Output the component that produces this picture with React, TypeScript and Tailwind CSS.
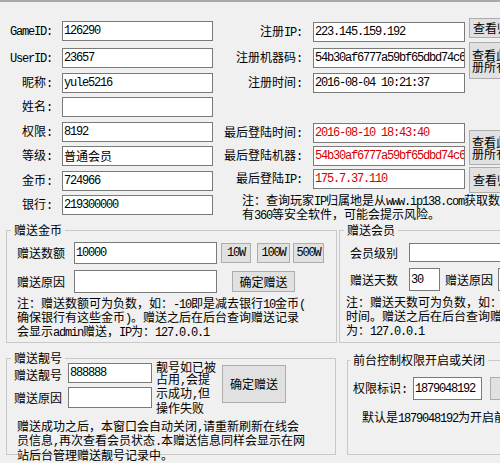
import React from "react";

const MONO = "font-['Liberation_Mono',monospace] tracking-[-1.2px]";

// split a string so latin runs get the narrow mono face and CJK keeps Noto
function Mx({ s }: { s: string }) {
  const parts = s.split(/([\x20-\x7e]+)/).filter(Boolean);
  return (
    <>
      {parts.map((p, i) =>
        /^[\x20-\x7e]+$/.test(p) ? (
          <span key={i} className={MONO}>
            {p}
          </span>
        ) : (
          <span key={i}>{p}</span>
        )
      )}
    </>
  );
}

function Field({ v = "", red, className = "" }: { v?: string; red?: boolean; className?: string }) {
  return (
    <div
      className={`flex items-center bg-white border border-[#7a7a7a] overflow-hidden whitespace-nowrap pl-[1px] shrink-0 ${
        red ? "text-[#d40000]" : ""
      } ${className}`}
    >
      <Mx s={v} />
    </div>
  );
}

function Btn({ children, className = "" }: { children?: React.ReactNode; className?: string }) {
  return (
    <div
      className={`flex flex-col justify-center bg-[#e1e1e1] border border-[#adadad] shrink-0 overflow-hidden whitespace-nowrap ${className}`}
    >
      {children}
    </div>
  );
}

function LRow({ label, v, className = "" }: { label: string; v: string; className?: string }) {
  return (
    <div className={`flex items-center ${className}`}>
      <div className="w-[52px] text-right whitespace-nowrap">
        <Mx s={label} />
      </div>
      <Field v={v} className="ml-[10px] w-[151px] h-[20px]" />
    </div>
  );
}

function RRow({ label, v, red, className = "" }: { label: string; v: string; red?: boolean; className?: string }) {
  return (
    <div className={`flex items-center ${className}`}>
      <div className="w-[82px] text-right whitespace-nowrap">
        <Mx s={label} />
      </div>
      <Field v={v} red={red} className="ml-[11px] w-[152px] h-[20px]" />
    </div>
  );
}

function Group({ title, className = "", legendClass = "ml-[4px]", children }: { title: string; className?: string; legendClass?: string; children: React.ReactNode }) {
  return (
    <fieldset className={`border border-[#c8c8c8] min-w-0 shrink-0 ${className}`}>
      <legend className={`px-[3px] leading-[16px] whitespace-nowrap ${legendClass}`}>{title}</legend>
      {children}
    </fieldset>
  );
}

export default function App() {
  return (
    <div className="w-[500px] h-[463px] overflow-hidden bg-[#f0f0f0] border-t-2 border-[#a9a9a9] text-black text-[12px] leading-[12px] font-['Noto_Sans_CJK_SC',sans-serif]">
      {/* user info */}
      <div className="flex h-[220px]">
        <div className="w-[213px] flex flex-col shrink-0">
          <LRow label="GameID:" v="126290" className="mt-[19px]" />
          <LRow label="UserID:" v="23657" className="mt-[7px]" />
          <LRow label="昵称:" v="yule5216" className="mt-[5px]" />
          <LRow label="姓名:" v="" className="mt-[4px]" />
          <LRow label="权限:" v="8192" className="mt-[5px]" />
          <LRow label="等级:" v="普通会员" className="mt-[4px]" />
          <LRow label="金币:" v="724966" className="mt-[5px]" />
          <LRow label="银行:" v="219300000" className="mt-[4px]" />
        </div>

        <div className="ml-[7px] w-[245px] flex flex-col shrink-0">
          <RRow label="注册IP:" v="223.145.159.192" className="mt-[20px]" />
          <RRow label="注册机器码:" v="54b30af6777a59bf65dbd74c6" className="mt-[6px]" />
          <RRow label="注册时间:" v="2016-08-04 10:21:37" className="mt-[5px]" />
          <RRow label="最后登陆时间:" v="2016-08-10 18:43:40" red className="mt-[30px]" />
          <RRow label="最后登陆机器:" v="54b30af6777a59bf65dbd74c6" red className="mt-[3px]" />
          <RRow label="最后登陆IP:" v="175.7.37.110" red className="mt-[3px]" />
          <div className="mt-[5px] pl-[22px] whitespace-nowrap">
            <div>
              <Mx s="注：查询玩家IP归属地是从www.ip138.com获取数据，如电脑上装" />
            </div>
            <div>
              <Mx s="有360等安全软件，可能会提示风险。" />
            </div>
          </div>
        </div>

        <div className="ml-[4px] flex flex-col shrink-0">
          <Btn className="mt-[16px] w-[70px] h-[20px] pl-[3px]">查看归属地</Btn>
          <Btn className="mt-[4px] w-[70px] h-[37px] pl-[2px]">
            <div>查看此机器注</div>
            <div>册所有账号</div>
          </Btn>
          <Btn className="mt-[51px] w-[70px] h-[35px] pl-[2px]">
            <div>查看此机器注</div>
            <div>册所有账号</div>
          </Btn>
          <Btn className="mt-[2px] w-[70px] h-[26px] pl-[3px]">查看归属地</Btn>
        </div>
      </div>

      {/* gift coins / gift membership */}
      <div className="flex items-start">
        <Group title="赠送金币" className="ml-[6px] w-[331px] h-[121px]">
          <div className="flex items-center mt-[4px] pl-[10px]">
            <div className="w-[48px] whitespace-nowrap">赠送数额</div>
            <Field v="10000" className="ml-[9px] w-[143px] h-[22px]" />
            <Btn className="ml-[4px] w-[30px] h-[20px] items-center">
              <Mx s="10W" />
            </Btn>
            <Btn className="ml-[6px] w-[33px] h-[20px] items-center">
              <Mx s="100W" />
            </Btn>
            <Btn className="ml-[3px] w-[31px] h-[20px] items-center">
              <Mx s="500W" />
            </Btn>
          </div>
          <div className="flex items-center mt-[6px] pl-[10px]">
            <div className="w-[48px] whitespace-nowrap">赠送原因</div>
            <Field className="ml-[9px] w-[143px] h-[23px]" />
            <Btn className="ml-[15px] w-[63px] h-[21px] items-center">确定赠送</Btn>
          </div>
          <div className="mt-[4px] pl-[10px] whitespace-nowrap">
            <div>
              <Mx s="注：赠送数额可为负数，如：-10即是减去银行10金币(" />
            </div>
            <div>
              <Mx s="确保银行有这些金币)。赠送之后在后台查询赠送记录" />
            </div>
            <div>
              <Mx s="会显示admin赠送，IP为：127.0.0.1" />
            </div>
          </div>
        </Group>

        <Group title="赠送会员" className="ml-[2px] w-[200px] h-[121px]">
          <div className="flex items-center mt-[5px] pl-[10px]">
            <div className="w-[48px] whitespace-nowrap">会员级别</div>
            <Field className="ml-[11px] w-[120px] h-[19px]" />
          </div>
          <div className="flex items-center mt-[6px] pl-[10px]">
            <div className="w-[48px] whitespace-nowrap">赠送天数</div>
            <Field v="30" className="ml-[11px] w-[31px] h-[23px]" />
            <div className="ml-[5px] w-[48px] whitespace-nowrap">赠送原因</div>
            <Field className="ml-[5px] w-[60px] h-[23px]" />
          </div>
          <div className="mt-[5px] pl-[6px] whitespace-nowrap">
            <div>
              <Mx s="注：赠送天数可为负数，如：-10即是减去会员10天" />
            </div>
            <div>
              <Mx s="时间。赠送之后在后台查询赠送记录会显示admin赠送，IP" />
            </div>
            <div>
              <Mx s="为：127.0.0.1" />
            </div>
          </div>
        </Group>
      </div>

      {/* gift number / front permission */}
      <div className="flex items-start">
        <Group title="赠送靓号" className="mt-[7px] ml-[6px] w-[330px] h-[105px]">
          <div className="flex items-start mt-[-3px]">
            <div className="pl-[7px] flex flex-col">
              <div className="flex items-center">
                <div className="w-[48px] whitespace-nowrap pt-[3px]">赠送靓号</div>
                <Field v="888888" className="ml-[6px] w-[84px] h-[20px]" />
              </div>
              <div className="flex items-center mt-[4px]">
                <div className="w-[48px] whitespace-nowrap">赠送原因</div>
                <Field className="ml-[6px] w-[84px] h-[21px]" />
              </div>
            </div>
            <div className="ml-[4px] mt-[-2px] leading-[11.7px] whitespace-nowrap">
              <div>靓号如已被</div>
              <div>
                <Mx s="占用,会提" />
              </div>
              <div>
                <Mx s="示成功,但" />
              </div>
              <div>操作失败</div>
            </div>
            <Btn className="ml-[6px] mt-[2px] w-[64px] h-[38px] items-center">确定赠送</Btn>
          </div>
          <div className="mt-[6px] pl-[10px] leading-[11.5px] whitespace-nowrap">
            <div>
              <Mx s="赠送成功之后，本窗口会自动关闭,请重新刷新在线会" />
            </div>
            <div>
              <Mx s="员信息,再次查看会员状态.本赠送信息同样会显示在网" />
            </div>
            <div>站后台管理赠送靓号记录中。</div>
          </div>
        </Group>

        <Group title="前台控制权限开启或关闭" legendClass="ml-[2px]" className="mt-[9px] ml-[11px] w-[200px] h-[103px]">
          <div className="flex items-center mt-[9px] pl-[5px]">
            <div className="whitespace-nowrap">
              <Mx s="权限标识:" />
            </div>
            <Field v="1879048192" className="ml-[6px] w-[69px] h-[23px]" />
            <Btn className="ml-[8px] w-[64px] h-[23px] items-center">修改</Btn>
          </div>
          <div className="mt-[11px] pl-[14px] whitespace-nowrap">
            <Mx s="默认是1879048192为开启前台权限" />
          </div>
        </Group>
      </div>
    </div>
  );
}
